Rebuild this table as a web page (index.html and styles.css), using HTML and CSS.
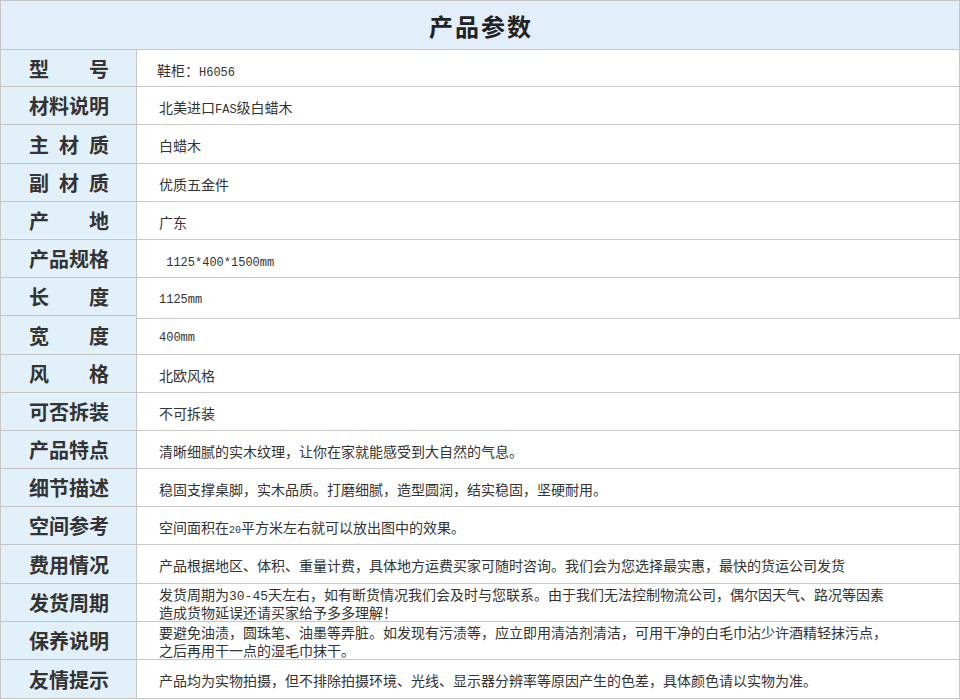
FILE: index.html
```html
<!DOCTYPE html>
<html lang="zh-CN">
<head>
<meta charset="utf-8">
<title>产品参数</title>
<link rel="stylesheet" href="styles.css">
</head>
<body>
<div class="params">
  <div class="params-head">产品参数</div>

  <div class="row h37"><div class="label"><span class="label-text">型号</span></div><div class="value value-first">鞋柜：<span class="en">H6056</span></div></div>
  <div class="row"><div class="label"><span class="label-text">材料说明</span></div><div class="value">北美进口<span class="en">FAS</span>级白蜡木</div></div>
  <div class="row h39"><div class="label"><span class="label-text">主材质</span></div><div class="value">白蜡木</div></div>
  <div class="row"><div class="label"><span class="label-text">副材质</span></div><div class="value">优质五金件</div></div>
  <div class="row"><div class="label"><span class="label-text">产地</span></div><div class="value">广东</div></div>
  <div class="row"><div class="label"><span class="label-text">产品规格</span></div><div class="value"><span class="en">&nbsp;1125*400*1500mm</span></div></div>
  <div class="row"><div class="label"><span class="label-text">长度</span></div><div class="value value-long"><span class="en">1125mm</span></div></div>
  <div class="row h39"><div class="label"><span class="label-text">宽度</span></div><div class="value value-short"><span class="en">400mm</span></div></div>
  <div class="row"><div class="label"><span class="label-text">风格</span></div><div class="value">北欧风格</div></div>
  <div class="row"><div class="label"><span class="label-text">可否拆装</span></div><div class="value">不可拆装</div></div>
  <div class="row"><div class="label"><span class="label-text">产品特点</span></div><div class="value">清晰细腻的实木纹理，让你在家就能感受到大自然的气息。</div></div>
  <div class="row"><div class="label"><span class="label-text">细节描述</span></div><div class="value">稳固支撑桌脚，实木品质。打磨细腻，造型圆润，结实稳固，坚硬耐用。</div></div>
  <div class="row"><div class="label"><span class="label-text">空间参考</span></div><div class="value">空间面积在<span class="en-s">20</span>平方米左右就可以放出图中的效果。</div></div>
  <div class="row h39"><div class="label"><span class="label-text">费用情况</span></div><div class="value">产品根据地区、体积、重量计费，具体地方运费买家可随时咨询。我们会为您选择最实惠，最快的货运公司发货</div></div>
  <div class="row"><div class="label"><span class="label-text">发货周期</span></div><div class="value multi"><span class="line">发货周期为<span class="en-l">30-45</span>天左右，如有断货情况我们会及时与您联系。由于我们无法控制物流公司，偶尔因天气、路况等因素</span><span class="line">造成货物延误还请买家给予多多理解！</span></div></div>
  <div class="row"><div class="label"><span class="label-text">保养说明</span></div><div class="value multi"><span class="line">要避免油渍，圆珠笔、油墨等弄脏。如发现有污渍等，应立即用清洁剂清洁，可用干净的白毛巾沾少许酒精轻抹污点，</span><span class="line">之后再用干一点的湿毛巾抹干。</span></div></div>
  <div class="row h39"><div class="label"><span class="label-text">友情提示</span></div><div class="value">产品均为实物拍摄，但不排除拍摄环境、光线、显示器分辨率等原因产生的色差，具体颜色请以实物为准。</div></div>
</div>
</body>
</html>
```

FILE: styles.css
```css
* { box-sizing: border-box; }

html, body {
  margin: 0;
  padding: 0;
  background: #ffffff;
}

body {
  font-family: "Noto Sans CJK SC", "Noto Sans", sans-serif;
  color: #333333;
}

.params {
  width: 960px;
  border-top: 1px solid #c6c6c6;
  border-left: 1px solid #c6c6c6;
}

.params-head {
  height: 49px;
  background: #e2effa;
  border-right: 1px solid #c6c6c6;
  border-bottom: 1px solid #c6c6c6;
  display: flex;
  align-items: center;
  justify-content: center;
  font-size: 24px;
  font-weight: 700;
  letter-spacing: 2px;
  color: #222222;
  padding-left: 2px;
}

.row {
  display: flex;
  align-items: flex-start;
  height: 38px;
}

.row.h37 { height: 37px; }
.row.h39 { height: 39px; }

.label {
  flex: 0 0 136px;
  height: 100%;
  background: #e2f0fa;
  border-right: 1px solid #c6c6c6;
  border-bottom: 1px solid #c6c6c6;
  display: flex;
  align-items: center;
  justify-content: center;
  padding-left: 1px;
}

.label-text {
  display: block;
  width: 80px;
  font-size: 20px;
  font-weight: 700;
  line-height: 24px;
  color: #333333;
  text-align: justify;
  text-align-last: justify;
  text-justify: inter-character;
  margin-top: 1px;
}

.value {
  flex: 1 1 auto;
  height: 100%;
  border-right: 1px solid #c6c6c6;
  border-bottom: 1px solid #c6c6c6;
  padding: 4px 0 0 22px;
  font-size: 14px;
  line-height: 32px;
  color: #333333;
  white-space: nowrap;
  overflow: hidden;
}

.value-first { padding-left: 20px; }

.value-long {
  height: 41px;
  flex: none;
  width: 823px;
  margin-bottom: -3px;
  padding-top: 3px;
}

.value-short {
  height: 36px;
  margin-top: 3px;
  padding-top: 0;
  border-right: none;
}

.value.multi {
  display: flex;
  flex-direction: column;
  padding: 2px 0 0 22px;
  line-height: 16px;
  gap: 2px;
}

.line {
  display: block;
  height: 16px;
}

.en {
  font-family: "Liberation Mono", monospace;
  font-size: 12px;
  line-height: 1;
}

.en-s {
  font-family: "Liberation Mono", monospace;
  font-size: 10px;
  line-height: 1;
}

.en-l {
  font-family: "Liberation Mono", monospace;
  font-size: 13px;
  line-height: 1;
}
```
